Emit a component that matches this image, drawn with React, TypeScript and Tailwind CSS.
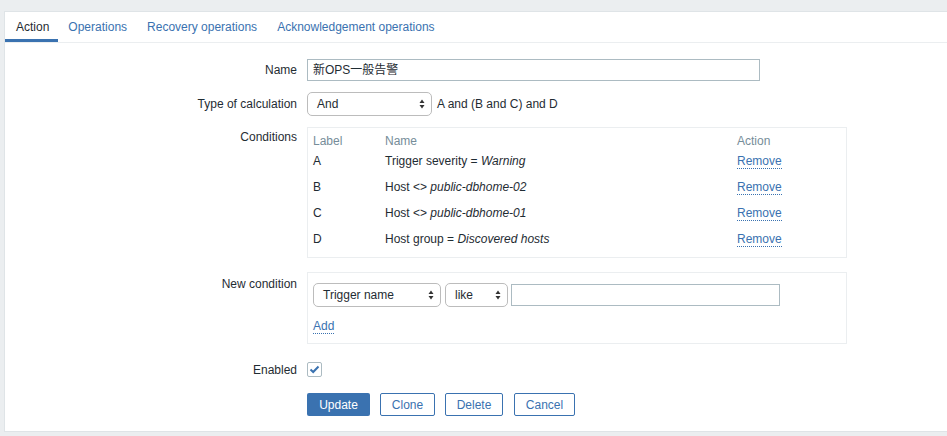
const font = { fontFamily: '"Liberation Sans", Arial, "Noto Sans CJK SC", sans-serif' }

const Arrows = () => (
    <svg width="6" height="10" viewBox="0 0 6 10" className="shrink-0">
        <path d="M3 0.5 L5.5 4 L0.5 4 Z" fill="#333" />
        <path d="M3 9.5 L5.5 6 L0.5 6 Z" fill="#333" />
    </svg>
)

const Select = ({ text, w }: { text: string; w: string }) => (
    <div className={`${w} h-[24px] flex items-center justify-between pl-[9px] pr-[6px] border border-[#bcbcbc] rounded-[5px] bg-white text-[12px] text-[#1f2c33]`}>
        <span>{text}</span>
        <Arrows />
    </div>
)

const Remove = () => (
    <span className="text-[#3a72b0] border-b border-dotted border-[#3a72b0] leading-[13px]">Remove</span>
)

const conditions = [
    { l: "A", k: "Trigger severity = ", v: "Warning" },
    { l: "B", k: "Host <> ", v: "public-dbhome-02" },
    { l: "C", k: "Host <> ", v: "public-dbhome-01" },
    { l: "D", k: "Host group = ", v: "Discovered hosts" },
]

const App = () => {
    return (
        <div className="w-[947px] h-[436px] bg-[#ebeef0] pt-[11px] pl-[4px] overflow-hidden" style={font}>
            <div className="h-[421px] bg-white border border-r-0 border-[#dfe4e7] text-[12px] text-[#1f2c33]">

                {/* tabs */}
                <div className="flex h-[31px] border-b border-[#ebeef0]">
                    <div className="pl-[11px] pr-[9px] flex items-center border-b-[3px] border-[#3a72b0] pt-[3px]">Action</div>
                    <div className="px-[10px] flex items-center text-[#3a72b0] pt-[3px] pb-[3px]">Operations</div>
                    <div className="px-[10px] flex items-center text-[#3a72b0] pt-[3px] pb-[3px]">Recovery operations</div>
                    <div className="px-[10px] flex items-center text-[#3a72b0] pt-[3px] pb-[3px]">Acknowledgement operations</div>
                </div>

                <div className="grid grid-cols-[292px_1fr] gap-x-[10px] pt-[16px]">
                    {/* name */}
                    <div className="h-[22px] flex items-center justify-end">Name</div>
                    <div className="w-[453px] h-[22px] border border-[#acbbc2] flex items-center px-[5px]">新OPS一般告警</div>

                    {/* type of calculation */}
                    <div className="h-[24px] mt-[11px] flex items-center justify-end">Type of calculation</div>
                    <div className="mt-[11px] flex items-center gap-[5px]">
                        <Select text="And" w="w-[125px]" />
                        <span>A and (B and C) and D</span>
                    </div>

                    {/* conditions */}
                    <div className="mt-[11px] pt-[1px] text-right">Conditions</div>
                    <div className="mt-[11px] w-[540px] h-[131px] border border-[#ebeef0] pt-[4px] px-[5px]">
                        <div className="grid grid-cols-[72px_352px_1fr] h-[16px] items-center text-[#768d99]">
                            <span>Label</span>
                            <span>Name</span>
                            <span>Action</span>
                        </div>
                        {conditions.map((c) => (
                            <div key={c.l} className="grid grid-cols-[72px_352px_1fr] h-[26px] items-center">
                                <span>{c.l}</span>
                                <span>{c.k}<i>{c.v}</i></span>
                                <span><Remove /></span>
                            </div>
                        ))}
                    </div>

                    {/* new condition */}
                    <div className="mt-[14px] pt-[3px] text-right">New condition</div>
                    <div className="mt-[14px] w-[540px] h-[72px] border border-[#ebeef0] pt-[10px] px-[5px]">
                        <div className="flex items-center gap-[4px]">
                            <Select text="Trigger name" w="w-[128px]" />
                            <Select text="like" w="w-[63px]" />
                            <div className="w-[269px] h-[22px] border border-[#acbbc2] -ml-[1px]" />
                        </div>
                        <div className="mt-[10px]">
                            <span className="text-[#3a72b0] border-b border-dotted border-[#3a72b0]">Add</span>
                        </div>
                    </div>

                    {/* enabled */}
                    <div className="mt-[18px] h-[15px] flex items-center justify-end">Enabled</div>
                    <div className="mt-[18px]">
                        <div className="w-[15px] h-[15px] border border-[#acbbc2] rounded-[2px] flex items-center justify-center">
                            <svg width="11" height="9" viewBox="0 0 11 9">
                                <path d="M1.5 4.5 L4.2 7 L9.5 1.5" stroke="#3a72b0" strokeWidth="2" fill="none" />
                            </svg>
                        </div>
                    </div>

                    {/* buttons */}
                    <div />
                    <div className="mt-[16px] flex gap-[10px]">
                        <button className="w-[63px] h-[23px] rounded-[2px] bg-[#3a72b0] text-white" style={font}>Update</button>
                        <button className="w-[55px] h-[23px] rounded-[2px] border border-[#3a72b0] text-[#3a72b0]" style={font}>Clone</button>
                        <button className="w-[58px] h-[23px] rounded-[2px] border border-[#3a72b0] text-[#3a72b0]" style={font}>Delete</button>
                        <button className="w-[61px] h-[23px] rounded-[2px] border border-[#3a72b0] text-[#3a72b0] ml-[1px]" style={font}>Cancel</button>
                    </div>
                </div>
            </div>
        </div>
    )
}

export default App
